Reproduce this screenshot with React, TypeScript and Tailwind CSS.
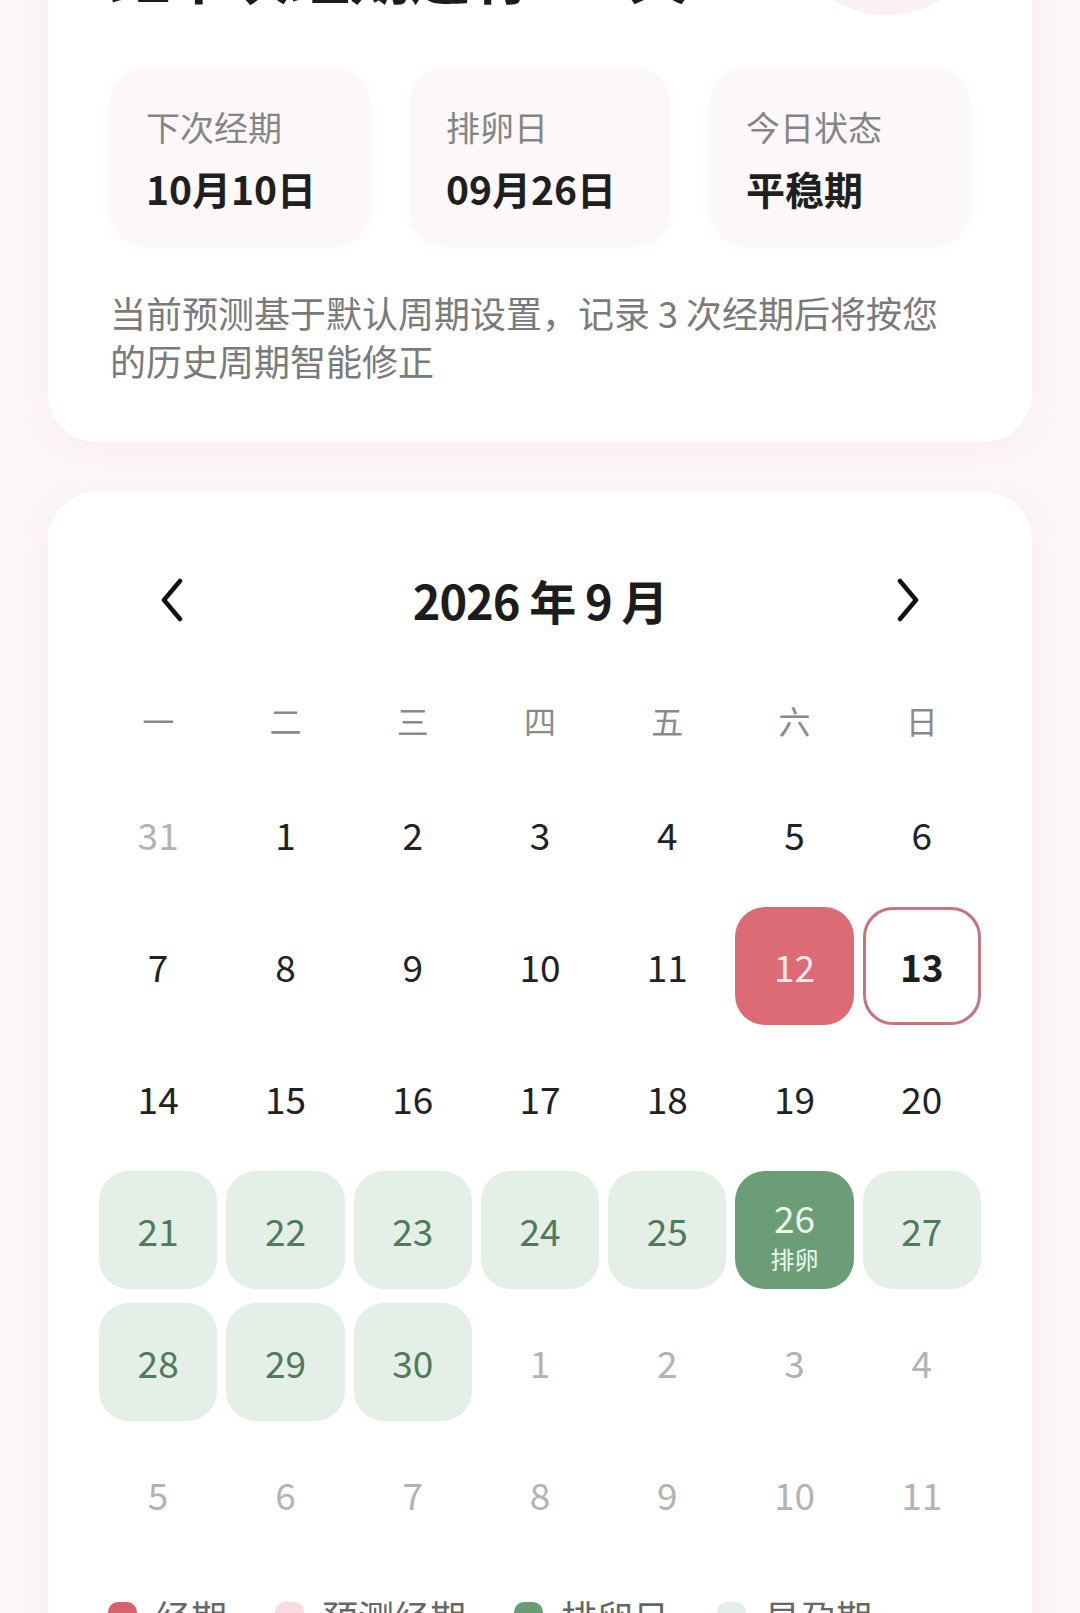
import React from "react";

type Kind = "normal" | "faded" | "period" | "today" | "fertile" | "ovulation";

const weekdays = ["一", "二", "三", "四", "五", "六", "日"];

const rows: { d: number; k: Kind }[][] = [
  [{ d: 31, k: "faded" }, ...[1, 2, 3, 4, 5, 6].map((d) => ({ d, k: "normal" as Kind }))],
  [...[7, 8, 9, 10, 11].map((d) => ({ d, k: "normal" as Kind })), { d: 12, k: "period" }, { d: 13, k: "today" }],
  [14, 15, 16, 17, 18, 19, 20].map((d) => ({ d, k: "normal" as Kind })),
  [
    ...[21, 22, 23, 24, 25].map((d) => ({ d, k: "fertile" as Kind })),
    { d: 26, k: "ovulation" },
    { d: 27, k: "fertile" },
  ],
  [
    ...[28, 29, 30].map((d) => ({ d, k: "fertile" as Kind })),
    ...[1, 2, 3, 4].map((d) => ({ d, k: "faded" as Kind })),
  ],
  [5, 6, 7, 8, 9, 10, 11].map((d) => ({ d, k: "faded" as Kind })),
];

const cellStyle: Record<Kind, string> = {
  normal: "text-[#222222]",
  faded: "text-[#b3b3b3]",
  period: "bg-[#dc6b76] text-[#fde9ec]",
  today: "border-[3px] border-[#c9737e] bg-white font-bold text-[#1e1e1e]",
  fertile: "bg-[#e4efe7] text-[#4f7a5b]",
  ovulation: "bg-[#6b9e77] pt-[8px] text-[#eef7ec]",
};

function DayCell({ d, k }: { d: number; k: Kind }) {
  return (
    <div className={`flex h-[118px] flex-col items-center justify-center rounded-[30px] ${cellStyle[k]}`}>
      <span className="text-[37px] leading-[44px]">{d}</span>
      {k === "ovulation" && <span className="mt-[6px] text-[24px] leading-[28px]">排卵</span>}
    </div>
  );
}

function Stat({ label, value }: { label: string; value: string }) {
  return (
    <div className="rounded-[36px] bg-[#fcf7f8] pl-[36px] pt-[38px] pb-[35px] shadow-[0_2px_10px_rgba(220,170,180,0.06)]">
      <div className="text-[34px] leading-[44px] text-[#858585]">{label}</div>
      <div className="mt-[15px] text-[39px] font-bold leading-[48px] text-[#1f1f1f]">{value}</div>
    </div>
  );
}

function Chevron({ dir }: { dir: "left" | "right" }) {
  return (
    <svg width="24" height="44" viewBox="0 0 24 44" fill="none">
      <polyline
        points={dir === "left" ? "20,3 4,22 20,41" : "4,3 20,22 4,41"}
        stroke="#111111"
        strokeWidth="4.5"
        strokeLinecap="round"
        strokeLinejoin="round"
      />
    </svg>
  );
}

const legend = [
  { label: "经期", color: "bg-[#d9606c]" },
  { label: "预测经期", color: "bg-[#f7dde2]" },
  { label: "排卵日", color: "bg-[#6a9b74]" },
  { label: "易孕期", color: "bg-[#e6eeea]" },
];

export default function App() {
  return (
    <div className="min-h-screen overflow-hidden bg-[#fcf6f7] px-[48px] pb-[80px] font-['Noto_Sans_CJK_SC','Noto_Sans',sans-serif]">
      {/* summary card */}
      <div className="-mt-[144px] rounded-[48px] bg-white px-[62px] pt-[87px] pb-[58px] shadow-[0_6px_30px_rgba(220,150,165,0.08)]">
        <div className="flex h-[60px] items-start justify-between">
          <h1 className="text-[60px] font-bold leading-[60px] text-[#1c1c1c]">
            距下次经期还有 <span className="text-[#dc6b76]">27</span> 天
          </h1>
          <div className="-mr-[20px] -mt-[134px] h-[206px] w-[206px] shrink-0 rounded-full bg-[#fbf0f2]" />
        </div>

        <div className="mt-[64px] grid grid-cols-3 gap-[40px]">
          <Stat label="下次经期" value="10月10日" />
          <Stat label="排卵日" value="09月26日" />
          <Stat label="今日状态" value="平稳期" />
        </div>

        <p className="mt-[41px] text-[36px] leading-[48px] text-[#7a7a7a]">
          当前预测基于默认周期设置，记录 3 次经期后将按您的历史周期智能修正
        </p>
      </div>

      {/* calendar card */}
      <div className="mt-[50px] rounded-[48px] bg-white px-[51px] pt-[78px] pb-[60px] shadow-[0_6px_30px_rgba(220,150,165,0.08)]">
        <div className="flex h-[60px] items-center justify-between px-[61px]">
          <Chevron dir="left" />
          <div className="text-[47px] font-bold leading-[60px] tracking-[-1px] text-[#1c1c1c]">2026 年 9 月</div>
          <Chevron dir="right" />
        </div>

        <div className="mt-[65px] grid grid-cols-7 gap-x-[9px]">
          {weekdays.map((w) => (
            <div key={w} className="flex h-[50px] items-center justify-center text-[32px] text-[#8a8a8a]">
              {w}
            </div>
          ))}
        </div>

        <div className="mt-[30px] grid grid-cols-7 gap-x-[9px] gap-y-[14px]">
          {rows.flat().map((c, i) => (
            <DayCell key={i} d={c.d} k={c.k} />
          ))}
        </div>

        <div className="mt-[43px] ml-[9px] flex items-center gap-[48px]">
          {legend.map((l) => (
            <div key={l.label} className="flex items-center gap-[18px]">
              <span className={`h-[29px] w-[29px] rounded-[10px] ${l.color}`} />
              <span className="text-[36px] leading-[40px] text-[#666666]">{l.label}</span>
            </div>
          ))}
        </div>
      </div>
    </div>
  );
}
